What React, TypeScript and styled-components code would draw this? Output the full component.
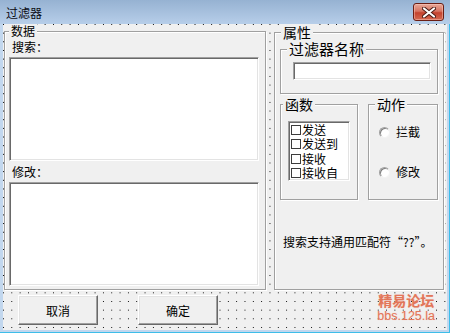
import React from 'react';
import styled, { createGlobalStyle } from 'styled-components';

const FONT = `"Noto Sans CJK SC", "Noto Sans", sans-serif`;

const GlobalStyle = createGlobalStyle`
  html, body { margin: 0; padding: 0; background: #fff; }
  body { width: 450px; height: 333px; overflow: hidden; font-family: ${FONT}; }
`;

const Window = styled.div`
  width: 450px;
  height: 333px;
  box-sizing: border-box;
  display: flex;
  flex-direction: column;
  background: #c2d7ee;
  box-shadow: inset -1px -1px 0 #3dbde9;
  position: relative;
`;

const TitleBar = styled.div`
  height: 24px;
  flex: none;
  display: flex;
  align-items: flex-start;
  justify-content: space-between;
  padding: 0 6px 0 6px;
  background: linear-gradient(#96b2d2, #b7cee9);
`;

const Title = styled.span`
  font-size: 12px;
  line-height: 14px;
  margin-top: 6px;
  color: #0b0b14;
`;

const CloseBtn = styled.div`
  width: 31px;
  height: 18px;
  margin-top: 3px;
  box-sizing: border-box;
  border: 1px solid #6a1e14;
  border-radius: 3px;
  background: linear-gradient(#e8a898 0%, #d67462 45%, #c4422e 55%, #d46a52 100%);
  box-shadow: inset 0 0 0 1px rgba(255, 210, 200, 0.45);
  display: flex;
  align-items: center;
  justify-content: center;
`;

const Frame = styled.div`
  flex: 1;
  display: flex;
  padding: 0 3px 3px 3px;
`;

const Client = styled.div`
  flex: 1;
  position: relative;
  display: flex;
  flex-direction: column;
  padding: 0 1px;
  background-color: #f0f0f0;
  background-image: conic-gradient(from 270deg at 1px 1px, #000 90deg, transparent 0);
  background-size: 8.33px 8.67px;
`;

const GroupRow = styled.div`
  display: flex;
  align-items: stretch;
  gap: 8px;
`;

const Group = styled.fieldset<{ $w: number; $pad?: string }>`
  margin: 0;
  box-sizing: border-box;
  width: ${(p) => p.$w}px;
  min-width: 0;
  border: 1px solid #a0a0a0;
  box-shadow: inset 1px 1px 0 #fff, 1px 1px 0 #fff;
  background: #f0f0f0;
  padding: ${(p) => p.$pad ?? '0 5px'};
  display: flex;
  flex-direction: column;
`;

const Legend = styled.legend<{ $size: number; $lh: number; $ml?: number }>`
  font-size: ${(p) => p.$size}px;
  line-height: ${(p) => p.$lh}px;
  padding: 0 2px;
  margin-left: ${(p) => p.$ml ?? 1}px;
  background: #f0f0f0;
  color: #000;
`;

const Label = styled.div<{ $mt?: number }>`
  font-size: 12px;
  line-height: 14px;
  color: #000;
  margin-top: ${(p) => p.$mt ?? 0}px;
  padding-left: 3px;
`;

const Sunken = `
  box-sizing: border-box;
  background: #fff;
  border-style: solid;
  border-width: 1px;
  border-color: #a0a0a0 #fff #fff #a0a0a0;
  box-shadow: inset 1px 1px 0 #696969, inset -1px -1px 0 #e3e3e3;
`;

const Edit = styled.textarea<{ $mt: number }>`
  ${Sunken}
  width: 250px;
  height: 104px;
  margin: ${(p) => p.$mt}px 0 0 0;
  padding: 0;
  resize: none;
  outline: none;
  font-family: ${FONT};
  font-size: 12px;
`;

const LineEdit = styled.input`
  ${Sunken}
  width: 138px;
  height: 18px;
  margin: 4px 0 0 7px;
  padding: 0;
  outline: none;
  font-family: ${FONT};
  font-size: 12px;
`;

const SubRow = styled.div`
  display: flex;
  gap: 10px;
  margin-top: 2px;
`;

const ListBox = styled.div`
  ${Sunken}
  width: 62px;
  height: 60px;
  margin: 9px 0 18px 2px;
  padding: 1px 0 0 2px;
  display: flex;
  flex-direction: column;
`;

const Item = styled.div`
  display: flex;
  align-items: center;
  height: 14.3px;
  font-size: 12px;
  line-height: 14px;
  color: #000;
`;

const Check = styled.span`
  width: 10px;
  height: 10px;
  box-sizing: border-box;
  border: 1px solid #3c3c3c;
  background: #fff;
  margin-right: 1px;
  flex: none;
`;

const RadioRow = styled.div<{ $mt: number }>`
  display: flex;
  align-items: center;
  gap: 6px;
  margin: ${(p) => p.$mt}px 0 0 5px;
  font-size: 12px;
  line-height: 14px;
  color: #000;
`;

const RadioDot = styled.span`
  width: 11px;
  height: 11px;
  box-sizing: border-box;
  border-radius: 50%;
  background: #fff;
  border: 1px solid;
  border-color: #a0a0a0 #f4f4f4 #f4f4f4 #a0a0a0;
  box-shadow: inset 1px 1px 0 #808080;
  flex: none;
`;

const Hint = styled.div`
  font-size: 12px;
  line-height: 14px;
  color: #000;
  margin: 35px 0 0 3px;
  white-space: nowrap;
`;

const ButtonRow = styled.div`
  display: flex;
  gap: 40px;
  margin-top: 5px;
  padding-left: 14px;
`;

const Button = styled.div`
  width: 80px;
  height: 30px;
  box-sizing: border-box;
  background: #f0f0f0;
  border-style: solid;
  border-width: 1px;
  border-color: #fff #696969 #696969 #fff;
  box-shadow: inset -1px -1px 0 #a0a0a0, inset 1px 1px 0 #e3e3e3;
  display: flex;
  align-items: center;
  justify-content: center;
  font-size: 12px;
  color: #000;
`;

const Watermark = styled.div`
  position: absolute;
  right: 12px;
  bottom: 7px;
  display: flex;
  flex-direction: column;
  align-items: center;
  color: #e2765a;
  text-shadow: 0 0 1px #f6c2b4;
`;

const WmTitle = styled.span`
  font-family: ${FONT};
  font-weight: 700;
  font-size: 14px;
  line-height: 17px;
  letter-spacing: 0px;
`;

const WmUrl = styled.span`
  font-family: "Liberation Sans", Arial, sans-serif;
  font-size: 12.5px;
  line-height: 14px;
`;

const funcs = ['发送', '发送到', '接收', '接收自'];

export default function App() {
  return (
    <>
      <GlobalStyle />
      <Window>
        <TitleBar>
          <Title>过滤器</Title>
          <CloseBtn>
            <svg width="14" height="11" viewBox="0 0 14 11">
              <path
                d="M2 1.5 L12 9.5 M12 1.5 L2 9.5"
                stroke="#4a1a12"
                strokeWidth="4"
                strokeLinecap="round"
              />
              <path
                d="M2 1.5 L12 9.5 M12 1.5 L2 9.5"
                stroke="#fff"
                strokeWidth="2.2"
                strokeLinecap="round"
              />
            </svg>
          </CloseBtn>
        </TitleBar>
        <Frame>
          <Client>
            <GroupRow>
              <Group $w={262} $pad="2px 5px 3px 4px">
                <Legend $size={12} $lh={14} $ml={0}>数据</Legend>
                <Label>搜索：</Label>
                <Edit $mt={3} readOnly />
                <Label $mt={4}>修改：</Label>
                <Edit $mt={3} readOnly />
              </Group>
              <Group $w={170}>
                <Legend $size={14} $lh={16}>属性</Legend>
                <Group $w={158} $pad="0 5px 13px 5px">
                  <Legend $size={15} $lh={18}>过滤器名称</Legend>
                  <LineEdit readOnly />
                </Group>
                <SubRow>
                  <Group $w={78}>
                    <Legend $size={14} $lh={16} $ml={-3}>函数</Legend>
                    <ListBox>
                      {funcs.map((f) => (
                        <Item key={f}>
                          <Check />
                          {f}
                        </Item>
                      ))}
                    </ListBox>
                  </Group>
                  <Group $w={70}>
                    <Legend $size={14} $lh={16}>动作</Legend>
                    <RadioRow $mt={13}>
                      <RadioDot />
                      拦截
                    </RadioRow>
                    <RadioRow $mt={26}>
                      <RadioDot />
                      修改
                    </RadioRow>
                  </Group>
                </SubRow>
                <Hint>搜索支持通用匹配符“??”。</Hint>
              </Group>
            </GroupRow>
            <ButtonRow>
              <Button>取消</Button>
              <Button>确定</Button>
            </ButtonRow>
            <Watermark>
              <WmTitle>精易论坛</WmTitle>
              <WmUrl>bbs.125.la</WmUrl>
            </Watermark>
          </Client>
        </Frame>
      </Window>
    </>
  );
}
